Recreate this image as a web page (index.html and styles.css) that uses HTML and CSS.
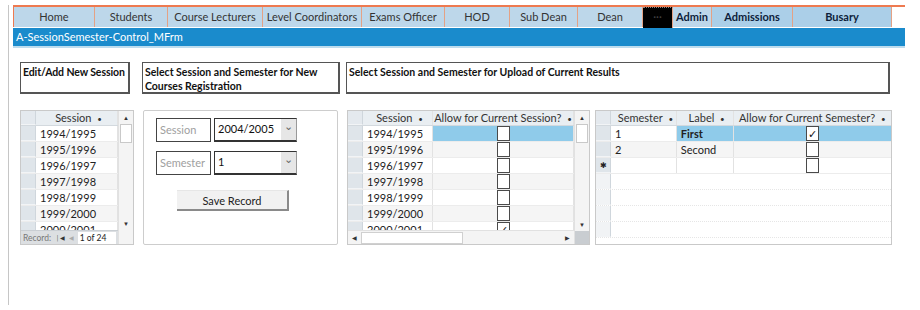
FILE: index.html
```html
<!DOCTYPE html>
<html lang="en">
<head>
  <meta charset="UTF-8">
  <title>A-SessionSemester-Control_MFrm</title>
  <link rel="stylesheet" href="styles.css">
</head>
<body>
  <div class="frame">
    <nav class="tabs">
      <div class="tab first">Home</div>
      <div class="tab">Students</div>
      <div class="tab">Course Lecturers</div>
      <div class="tab">Level Coordinators</div>
      <div class="tab">Exams Officer</div>
      <div class="tab">HOD</div>
      <div class="tab">Sub Dean</div>
      <div class="tab">Dean</div>
      <div class="tab black">&middot;&middot;&middot;</div>
      <div class="tab strong">Admin</div>
      <div class="tab strong deep">Admissions</div>
      <div class="tab strong deep">Busary</div>
      <div class="tab filler"></div>
    </nav>
    <div class="form-title">A-SessionSemester-Control_MFrm</div>

    <div class="form-body">
      <div class="heads">
        <div class="head head-session">Edit/Add New Session</div>
        <div class="head head-courses">Select Session and Semester for New Courses Registration</div>
        <div class="head head-results">Select Session and Semester for Upload of Current Results</div>
      </div>

      <div class="panels">
        <!-- session list -->
        <div class="grid grid-sessions">
          <div class="grid-main">
            <div class="row header">
              <div class="sel corner"></div>
              <div class="cell c-session">Session <span class="sort">&bull;</span></div>
            </div>
            <div class="rows">
              <div class="row"><div class="sel"></div><div class="cell c-session">1994/1995</div></div>
              <div class="row alt"><div class="sel"></div><div class="cell c-session">1995/1996</div></div>
              <div class="row"><div class="sel"></div><div class="cell c-session">1996/1997</div></div>
              <div class="row alt"><div class="sel"></div><div class="cell c-session">1997/1998</div></div>
              <div class="row"><div class="sel"></div><div class="cell c-session">1998/1999</div></div>
              <div class="row alt"><div class="sel"></div><div class="cell c-session">1999/2000</div></div>
              <div class="row"><div class="sel"></div><div class="cell c-session">2000/2001</div></div>
            </div>
            <div class="recbar">
              <span class="rec-label">Record:</span>
              <span class="rec-btn">&#9474;&#9664;</span>
              <span class="rec-btn faint">&#9664;</span>
              <span class="rec-box">1 of 24</span>
            </div>
          </div>
          <div class="vscroll">
            <span class="arrow">&#9650;</span>
            <span class="thumb"></span>
            <span class="track"></span>
            <span class="arrow">&#9660;</span>
          </div>
        </div>

        <!-- registration selection -->
        <div class="pick">
          <div class="pick-row">
            <div class="pick-label">Session</div>
            <div class="combo"><span class="combo-value">2004/2005</span><span class="combo-drop">&#8964;</span></div>
          </div>
          <div class="pick-row">
            <div class="pick-label">Semester</div>
            <div class="combo"><span class="combo-value">1</span><span class="combo-drop">&#8964;</span></div>
          </div>
          <button class="save-btn">Save Record</button>
        </div>

        <!-- current session -->
        <div class="grid grid-current">
          <div class="grid-main">
            <div class="row header">
              <div class="sel corner"></div>
              <div class="cell c-sess2">Session <span class="sort">&bull;</span></div>
              <div class="cell c-allow">Allow for Current Session? <span class="sort">&bull;</span></div>
            </div>
            <div class="rows">
              <div class="row"><div class="sel"></div><div class="cell c-sess2">1994/1995</div><div class="cell c-allow hilite"><span class="check"></span></div></div>
              <div class="row alt"><div class="sel"></div><div class="cell c-sess2">1995/1996</div><div class="cell c-allow"><span class="check"></span></div></div>
              <div class="row"><div class="sel"></div><div class="cell c-sess2">1996/1997</div><div class="cell c-allow"><span class="check"></span></div></div>
              <div class="row alt"><div class="sel"></div><div class="cell c-sess2">1997/1998</div><div class="cell c-allow"><span class="check"></span></div></div>
              <div class="row"><div class="sel"></div><div class="cell c-sess2">1998/1999</div><div class="cell c-allow"><span class="check"></span></div></div>
              <div class="row alt"><div class="sel"></div><div class="cell c-sess2">1999/2000</div><div class="cell c-allow"><span class="check"></span></div></div>
              <div class="row"><div class="sel"></div><div class="cell c-sess2">2000/2001</div><div class="cell c-allow"><span class="check on">&#10003;</span></div></div>
            </div>
            <div class="hscroll">
              <span class="arrow">&#9664;</span>
              <span class="hthumb"></span>
              <span class="htrack"></span>
              <span class="arrow">&#9654;</span>
            </div>
          </div>
          <div class="vscroll">
            <span class="arrow">&#9650;</span>
            <span class="thumb"></span>
            <span class="track"></span>
            <span class="arrow">&#9660;</span>
            <span class="corner-box"></span>
          </div>
        </div>

        <!-- current semester -->
        <div class="grid grid-semester">
          <div class="grid-main">
            <div class="row header">
              <div class="sel corner"></div>
              <div class="cell c-sem">Semester <span class="sort">&bull;</span></div>
              <div class="cell c-label">Label <span class="sort">&bull;</span></div>
              <div class="cell c-allow2">Allow for Current Semester? <span class="sort">&bull;</span></div>
            </div>
            <div class="rows">
              <div class="row"><div class="sel"></div><div class="cell c-sem">1</div><div class="cell c-label hilite bold">First</div><div class="cell c-allow2 hilite"><span class="check on">&#10003;</span></div></div>
              <div class="row alt"><div class="sel"></div><div class="cell c-sem">2</div><div class="cell c-label">Second</div><div class="cell c-allow2"><span class="check"></span></div></div>
              <div class="row"><div class="sel new">&#10033;</div><div class="cell c-sem"></div><div class="cell c-label"></div><div class="cell c-allow2"><span class="check"></span></div></div>
              <div class="row empty"><div class="sel"></div></div>
              <div class="row empty"><div class="sel"></div></div>
              <div class="row empty"><div class="sel"></div></div>
              <div class="row empty"><div class="sel"></div></div>
            </div>
          </div>
        </div>
      </div>
    </div>
  </div>
</body>
</html>
```

FILE: styles.css
```css
body {
  margin: 0;
  background-color: #fff;
  color: #222;
  font-family: Lato, "Open Sans", sans-serif;
  font-size: 11px;
}

/* Outer form frame */
.frame {
  margin: 5px 0 0 8px;
  padding-left: 4px;
  height: 300px;
  border-left: 1px solid #c6c6c6;
}

/* Navigation tabs */
.tabs {
  display: grid;
  grid-template-columns: 82px 73px 95px 99px 83px 65px 68px 65px 30px 39px 81px 99px 13px;
  width: 892px;
  margin-top: 3px;
  border-top: 2px solid #ee7a50;
}

.tab {
  height: 20px;
  line-height: 20px;
  text-align: center;
  background-color: #bdd7ea;
  border-right: 1px solid #e4a285;
  color: #333;
  font-size: 11px;
  white-space: nowrap;
  overflow: hidden;
}

.tab.first {
  border-left: 1px solid #ee7a50;
}

.tab.black {
  background-color: #000;
  color: #444;
  border-top: 1px dotted #888;
  line-height: 18px;
}

.tab.strong {
  font-weight: bold;
  color: #0d1e3a;
}

.tab.deep {
  background-color: #abcfe8;
}

.tab.filler {
  background-color: #fff;
  border-right: none;
}

.form-title {
  width: 889px;
  height: 18px;
  line-height: 18px;
  padding-left: 3px;
  background-color: #1a8bcc;
  color: #fff;
  font-size: 11px;
  border-bottom: 2px solid #bddcee;
}

.form-body {
  padding: 14px 0 0 7px;
}

/* Section headings */
.heads {
  display: flex;
  height: 32px;
}

.head {
  box-sizing: border-box;
  height: 32px;
  padding: 2px 2px;
  border: 1px solid #555;
  border-right-width: 2px;
  border-bottom-width: 2px;
  font-size: 10.5px;
  font-weight: bold;
  line-height: 14px;
  color: #111;
  white-space: normal;
}

.head-session { width: 110px; letter-spacing: -0.1px; }
.head-courses { width: 198px; margin-left: 12px; }
.head-results { width: 544px; margin-left: 6px; }

/* Panels row */
.panels {
  display: flex;
  align-items: flex-start;
  margin-top: 16px;
  height: 135px;
}

.grid {
  box-sizing: border-box;
  display: flex;
  height: 135px;
  border: 1px solid #c9c9c9;
  background-color: #fff;
  overflow: hidden;
}

.grid-sessions { width: 114px; }
.grid-current { width: 243px; margin-left: 9px; }
.grid-semester { width: 297px; margin-left: 5px; }

.grid-main {
  display: flex;
  flex-direction: column;
  flex: 1;
  min-width: 0;
}

.row {
  display: flex;
  height: 16px;
  flex-shrink: 0;
  border-bottom: 1px solid #ececec;
  box-sizing: border-box;
}

.row.header {
  height: 15px;
  background-color: #e9eef2;
  border-bottom: 1px solid #d3d9de;
  color: #333;
}

.row.alt .cell {
  background-color: #f5f5f5;
}

.row.empty {
  border-bottom: 1px dotted #e6e6e6;
}

.rows {
  flex: 1;
  overflow: hidden;
}

.sel {
  width: 15px;
  flex-shrink: 0;
  background-color: #dfe5ea;
  border-right: 1px solid #cfd6dc;
  border-bottom: 1px solid #f2f4f6;
  box-sizing: border-box;
}

.sel.corner {
  background-color: #e4e9ee;
}

.sel.new {
  font-size: 8px;
  line-height: 15px;
  text-align: center;
  color: #222;
}

.row.empty .sel {
  background-color: #f1f3f5;
}

.cell {
  box-sizing: border-box;
  padding-left: 4px;
  line-height: 15px;
  white-space: nowrap;
  overflow: hidden;
  border-right: 1px solid #e2e2e2;
}

.row.header .cell {
  text-align: center;
  line-height: 14px;
}

.sort {
  font-size: 8px;
  margin-left: 3px;
}

.c-session { width: 83px; }
.c-sess2 { width: 71px; }
.c-allow { width: 143px; text-align: center; padding-left: 0; }
.c-sem { width: 66px; }
.c-label { width: 57px; }
.c-allow2 { width: 158px; text-align: center; padding-left: 0; border-right: none; }

.row:not(.header) .cell.hilite,
.row.alt .cell.hilite {
  background-color: #8fcbea;
}

.bold { font-weight: bold; }

.check {
  display: inline-block;
  box-sizing: border-box;
  width: 13px;
  height: 15px;
  border: 1px solid #4a4a4a;
  background-color: #fff;
  vertical-align: top;
  font-size: 11px;
  line-height: 13px;
  text-align: center;
  color: #111;
}

/* Record navigation bar */
.recbar {
  display: flex;
  align-items: center;
  gap: 4px;
  height: 13px;
  background-color: #dcdfe2;
  font-size: 8.5px;
  color: #777;
  flex-shrink: 0;
  border-top: 1px solid #c9ced3;
  white-space: nowrap;
}

.rec-label { margin-left: 2px; }

.rec-btn {
  font-size: 6px;
  color: #333;
}

.rec-btn.faint { color: #aaa; }

.rec-box {
  padding: 0 2px;
  background-color: #fff;
  color: #222;
  line-height: 12px;
  width: 34px;
}

/* Scrollbars */
.vscroll {
  display: flex;
  flex-direction: column;
  width: 14px;
  flex-shrink: 0;
  background-color: #f4f4f4;
  border-left: 1px solid #e1e1e1;
}

.vscroll .arrow {
  height: 13px;
  font-size: 6px;
  line-height: 13px;
  text-align: center;
  color: #333;
}

.thumb {
  height: 17px;
  margin: 0 1px;
  background-color: #fff;
  border: 1px solid #c9c9c9;
}

.track {
  flex: 1;
}

.grid-sessions .vscroll .arrow:last-child {
  margin-bottom: 14px;
}

.corner-box {
  height: 13px;
  background-color: #c9cdd1;
}

.hscroll {
  display: flex;
  align-items: center;
  height: 13px;
  flex-shrink: 0;
  background-color: #f4f4f4;
  border-top: 1px solid #e1e1e1;
}

.hscroll .arrow {
  width: 13px;
  font-size: 6px;
  text-align: center;
  color: #333;
}

.hthumb {
  width: 100px;
  height: 10px;
  background-color: #fff;
  border: 1px solid #d0d0d0;
}

.htrack { flex: 1; }

/* Selection panel */
.pick {
  box-sizing: border-box;
  width: 195px;
  height: 135px;
  margin-left: 9px;
  padding: 7px 0 0 12px;
  border: 1px solid #cdcdcd;
  border-radius: 2px;
}

.pick-row {
  display: flex;
  height: 24px;
  margin-bottom: 9px;
}

.pick-label {
  box-sizing: border-box;
  width: 55px;
  height: 24px;
  padding-left: 3px;
  line-height: 22px;
  border: 1px solid #444;
  color: #a0a0a0;
}

.combo {
  box-sizing: border-box;
  display: flex;
  width: 83px;
  height: 24px;
  margin-left: 3px;
  border: 1px solid #333;
  border-right-color: #999;
  border-bottom-width: 2px;
}

.combo-value {
  flex: 1;
  padding-left: 3px;
  line-height: 20px;
  color: #111;
}

.combo-drop {
  width: 15px;
  background-color: #e6e6e6;
  text-align: center;
  line-height: 14px;
  color: #666;
}

.save-btn {
  display: block;
  width: 112px;
  height: 21px;
  margin: 15px 0 0 21px;
  padding: 0;
  background-color: #f1f1f1;
  border: none;
  border-right: 2px solid #8a8a8a;
  border-bottom: 2px solid #8a8a8a;
  border-top: 1px solid #e6e6e6;
  font-family: Lato, "Open Sans", sans-serif;
  font-size: 11px;
  color: #222;
}
```
